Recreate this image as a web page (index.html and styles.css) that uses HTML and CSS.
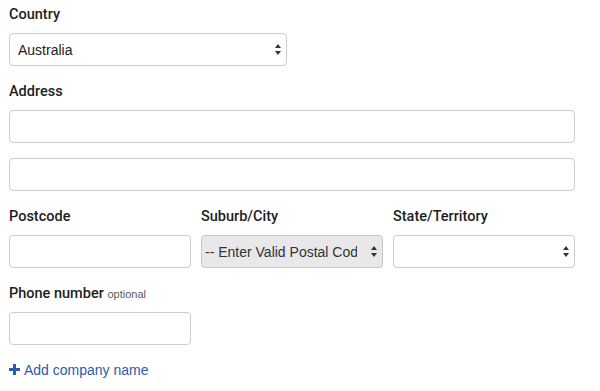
FILE: index.html
```html
<!DOCTYPE html>
<html lang="en">
  <head>
    <meta charset="UTF-8" />
    <title>Address</title>
    <link rel="stylesheet" href="styles.css">
  </head>
  <body>
    <form class="address-form">
      <div class="field">
        <label class="field-label">Country</label>
        <div class="select-wrap half">
          <select class="control">
            <option>Australia</option>
          </select>
          <svg class="arrows" width="6" height="11" viewBox="0 0 6 11"><path d="M3 0L6 4H0Z M3 11L0 7H6Z" fill="#333"/></svg>
        </div>
      </div>

      <div class="field">
        <label class="field-label">Address</label>
        <input class="control" type="text" />
        <input class="control second" type="text" />
      </div>

      <div class="field row">
        <div class="col">
          <label class="field-label">Postcode</label>
          <input class="control" type="text" />
        </div>
        <div class="col">
          <label class="field-label">Suburb/City</label>
          <div class="select-wrap">
            <select class="control disabled" disabled>
              <option>-- Enter Valid Postal Code --</option>
            </select>
            <svg class="arrows" width="6" height="11" viewBox="0 0 6 11"><path d="M3 0L6 4H0Z M3 11L0 7H6Z" fill="#333"/></svg>
          </div>
        </div>
        <div class="col">
          <label class="field-label">State/Territory</label>
          <div class="select-wrap">
            <select class="control">
              <option></option>
            </select>
            <svg class="arrows" width="6" height="11" viewBox="0 0 6 11"><path d="M3 0L6 4H0Z M3 11L0 7H6Z" fill="#333"/></svg>
          </div>
        </div>
      </div>

      <div class="field">
        <label class="field-label">Phone number <span class="optional">optional</span></label>
        <input class="control third" type="tel" />
      </div>

      <a class="add-link" href="#">
        <svg width="11" height="11" viewBox="0 0 11 11"><path d="M4 0H7V4H11V7H7V11H4V7H0V4H4Z" fill="#2d5ca8"/></svg>
        Add company name
      </a>
    </form>
  </body>
</html>
```

FILE: styles.css
```css
* {
  box-sizing: border-box;
}
body {
  margin: 0;
  background: #fff;
  font-family: "Liberation Sans", Arial, sans-serif;
  color: #222;
}
.address-form {
  width: 566px;
  margin: 5px 0 0 9px;
}
.field {
  margin-bottom: 16px;
}
.field-label {
  display: block;
  font-family: Roboto, "Liberation Sans", sans-serif;
  font-size: 14.5px;
  line-height: 20px;
  font-weight: 500;
  margin-bottom: 8px;
  color: #1e1e1e;
}
.optional {
  font-family: "Liberation Sans", sans-serif;
  font-size: 11px;
  font-weight: normal;
  color: #5a5a5a;
}
.control {
  display: block;
  width: 100%;
  height: 33px;
  border: 1px solid #ccc;
  border-radius: 4px;
  background: #fff;
  font-family: inherit;
  font-size: 14px;
  color: #222;
  padding: 0 8px;
  outline: none;
}
select.control {
  appearance: none;
  -webkit-appearance: none;
  padding-right: 18px;
}
.control.disabled {
  background: #e8e8ea;
  color: #333;
  opacity: 1;
  padding-left: 3px;
  padding-right: 25px;
  border-color: #c8c8cc;
}
.second {
  margin-top: 15px;
}
.half {
  width: 278px;
}
.third {
  width: 182px;
}
.select-wrap {
  position: relative;
}
.arrows {
  position: absolute;
  right: 6px;
  top: 11px;
  pointer-events: none;
}
.row {
  display: flex;
  gap: 10px;
}
.col {
  flex: 1;
  min-width: 0;
}
.add-link {
  display: inline-flex;
  align-items: center;
  gap: 4px;
  font-size: 14px;
  color: #2d5ca8;
  text-decoration: none;
}
```
